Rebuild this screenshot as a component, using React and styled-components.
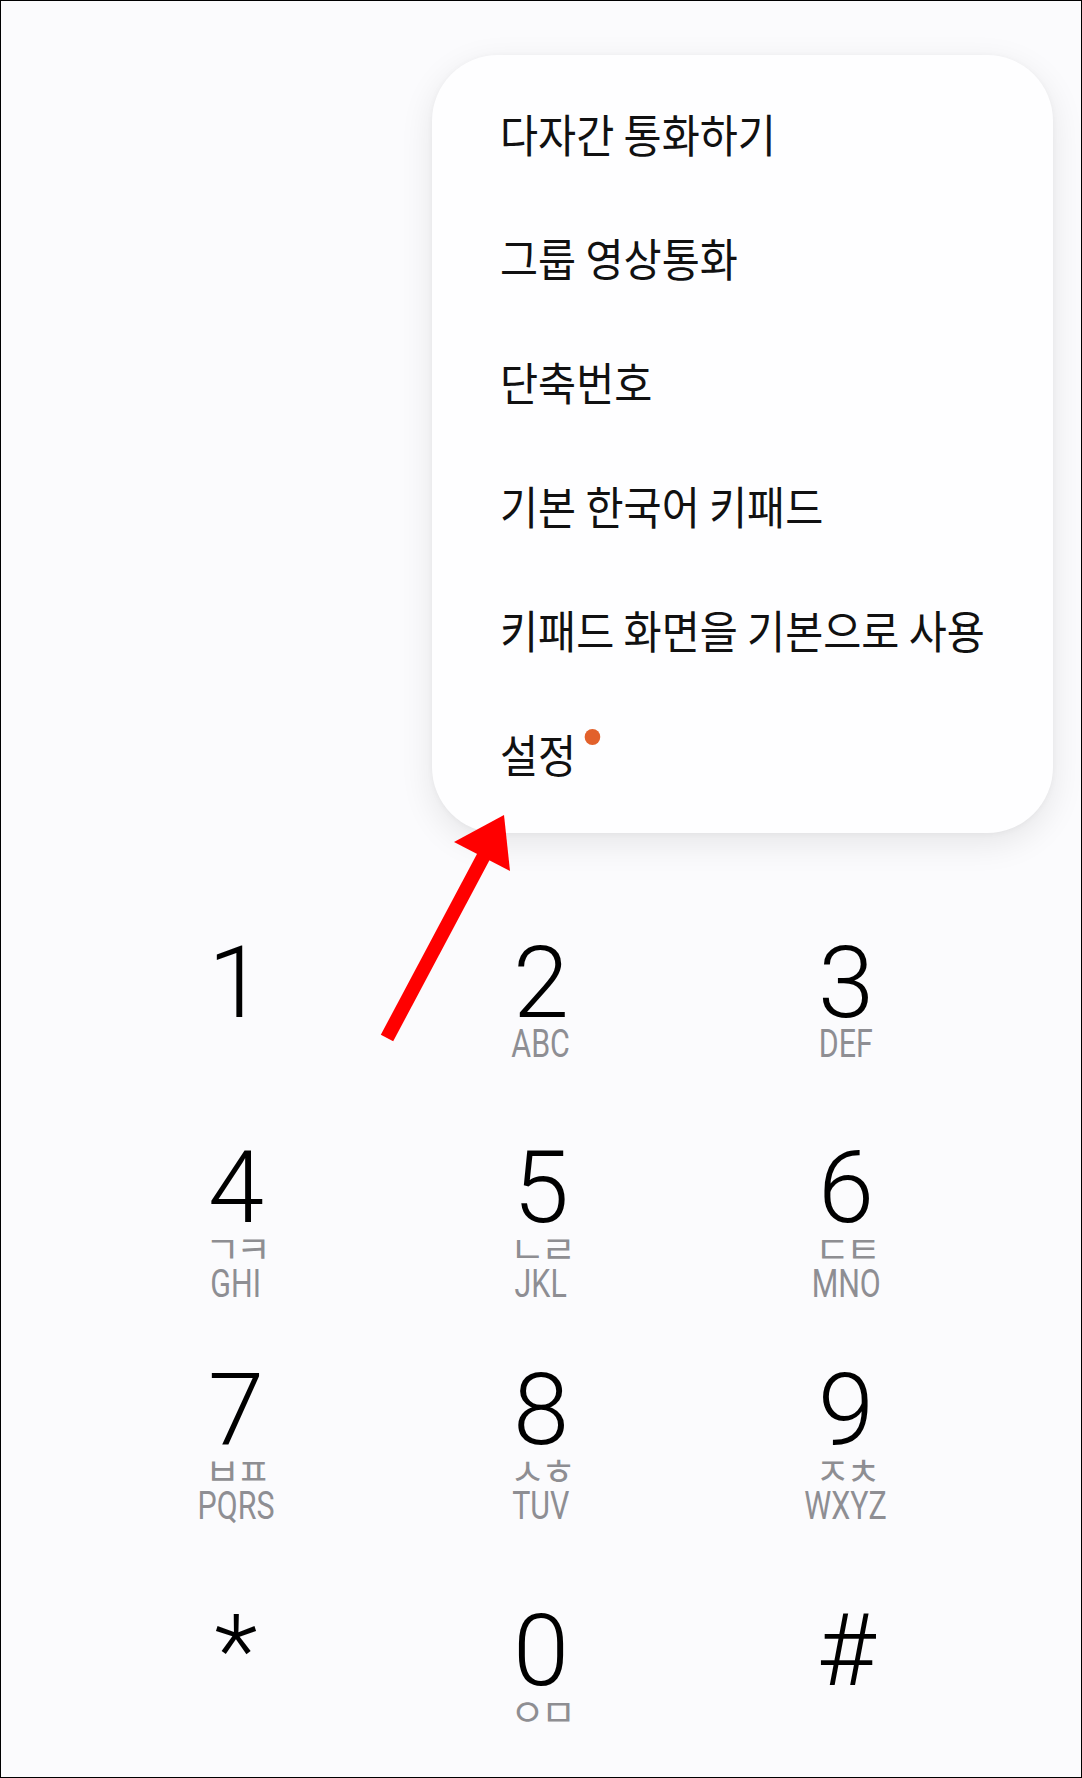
import React from 'react';
import styled, { createGlobalStyle, css } from 'styled-components';

const GlobalStyle = createGlobalStyle`
  html, body {
    margin: 0;
    padding: 0;
    background: #fbfbfd;
  }
  body {
    font-family: Roboto, "Noto Sans CJK KR", sans-serif;
  }
`;

const Screen = styled.div`
  position: relative;
  width: 1082px;
  height: 1778px;
  box-sizing: border-box;
  border: 1px solid #000;
  background: #fbfbfd;
  overflow: hidden;
  display: flex;
  flex-direction: column;
`;

const MenuArea = styled.div`
  display: flex;
  justify-content: flex-end;
  padding: 54px 28px 0 0;
`;

const Menu = styled.ul`
  list-style: none;
  margin: 0;
  width: 621px;
  box-sizing: border-box;
  padding: 17px 0;
  background: #fefeff;
  border-radius: 66px;
  box-shadow: 0 10px 34px rgba(0, 0, 0, 0.09), 0 1px 6px rgba(0, 0, 0, 0.04);
`;

const MenuItem = styled.li`
  height: 124px;
  display: flex;
  align-items: center;
  padding-left: 68px;
`;

const Label = styled.span`
  position: relative;
  display: inline-block;
  font-family: "Noto Sans CJK KR", sans-serif;
  font-size: 45px;
  line-height: 54px;
  color: #111;
  white-space: nowrap;
  transform: scaleX(0.92);
  transform-origin: left center;

  ${p => p.$badge && css`
    &::after {
      content: '';
      position: absolute;
      left: calc(100% + 9px);
      top: 2px;
      width: 17px;
      height: 16px;
      border-radius: 50%;
      background: #e2612b;
    }
  `}
`;

const Keypad = styled.div`
  margin-top: 58px;
  display: flex;
  flex-direction: column;
`;

const KeyRow = styled.div`
  display: grid;
  grid-template-columns: repeat(3, 305px);
  justify-content: center;
  align-content: center;
  align-items: start;
  height: 222px;
  box-sizing: border-box;
  padding-bottom: 2px;
`;

const Key = styled.div`
  display: flex;
  flex-direction: column;
  align-items: center;
`;

const Digit = styled.span`
  font-family: Roboto, sans-serif;
  font-weight: 300;
  font-size: 101px;
  line-height: 80px;
  height: 80px;
  color: #000;
`;

const Jamo = styled.span`
  font-family: "Noto Sans CJK KR", sans-serif;
  font-size: 38px;
  line-height: 27px;
  height: 27px;
  letter-spacing: -4px;
  margin-top: 5px;
  color: #8e8e92;
`;

const Letters = styled.span`
  display: inline-block;
  font-family: Roboto, sans-serif;
  font-size: 38px;
  line-height: 30px;
  height: 30px;
  color: #8e8e93;
  transform: scaleX(0.8);
  margin-top: 9px;

  ${Digit} + & {
    margin-top: 6px;
  }
`;

const Overlay = styled.svg`
  position: absolute;
  left: 0;
  top: 0;
  pointer-events: none;
`;

const menu = [
  { label: '다자간 통화하기' },
  { label: '그룹 영상통화' },
  { label: '단축번호' },
  { label: '기본 한국어 키패드' },
  { label: '키패드 화면을 기본으로 사용' },
  { label: '설정', badge: true },
];

const rows = [
  [{ d: '1' }, { d: '2', l: 'ABC' }, { d: '3', l: 'DEF' }],
  [{ d: '4', j: 'ㄱㅋ', l: 'GHI' }, { d: '5', j: 'ㄴㄹ', l: 'JKL' }, { d: '6', j: 'ㄷㅌ', l: 'MNO' }],
  [{ d: '7', j: 'ㅂㅍ', l: 'PQRS' }, { d: '8', j: 'ㅅㅎ', l: 'TUV' }, { d: '9', j: 'ㅈㅊ', l: 'WXYZ' }],
  [{ d: '*' }, { d: '0', j: 'ㅇㅁ' }, { d: '#' }],
];

const Arrow = () => (
  <Overlay width="1080" height="1776" viewBox="1 1 1080 1776">
    <line x1="387" y1="1038" x2="487" y2="850" stroke="#ff0000" strokeWidth="14" />
    <polygon points="454,842 504,815 510,871" fill="#ff0000" />
  </Overlay>
);

export default function App() {
  return (
    <>
      <GlobalStyle />
      <Screen>
        <MenuArea>
          <Menu>
            {menu.map(item => (
              <MenuItem key={item.label}>
                <Label $badge={item.badge}>{item.label}</Label>
              </MenuItem>
            ))}
          </Menu>
        </MenuArea>
        <Keypad>
          {rows.map((row, i) => (
            <KeyRow key={i}>
              {row.map(k => (
                <Key key={k.d}>
                  <Digit>{k.d}</Digit>
                  {k.j && <Jamo>{k.j}</Jamo>}
                  {k.l && <Letters>{k.l}</Letters>}
                </Key>
              ))}
            </KeyRow>
          ))}
        </Keypad>
        <Arrow />
      </Screen>
    </>
  );
}
